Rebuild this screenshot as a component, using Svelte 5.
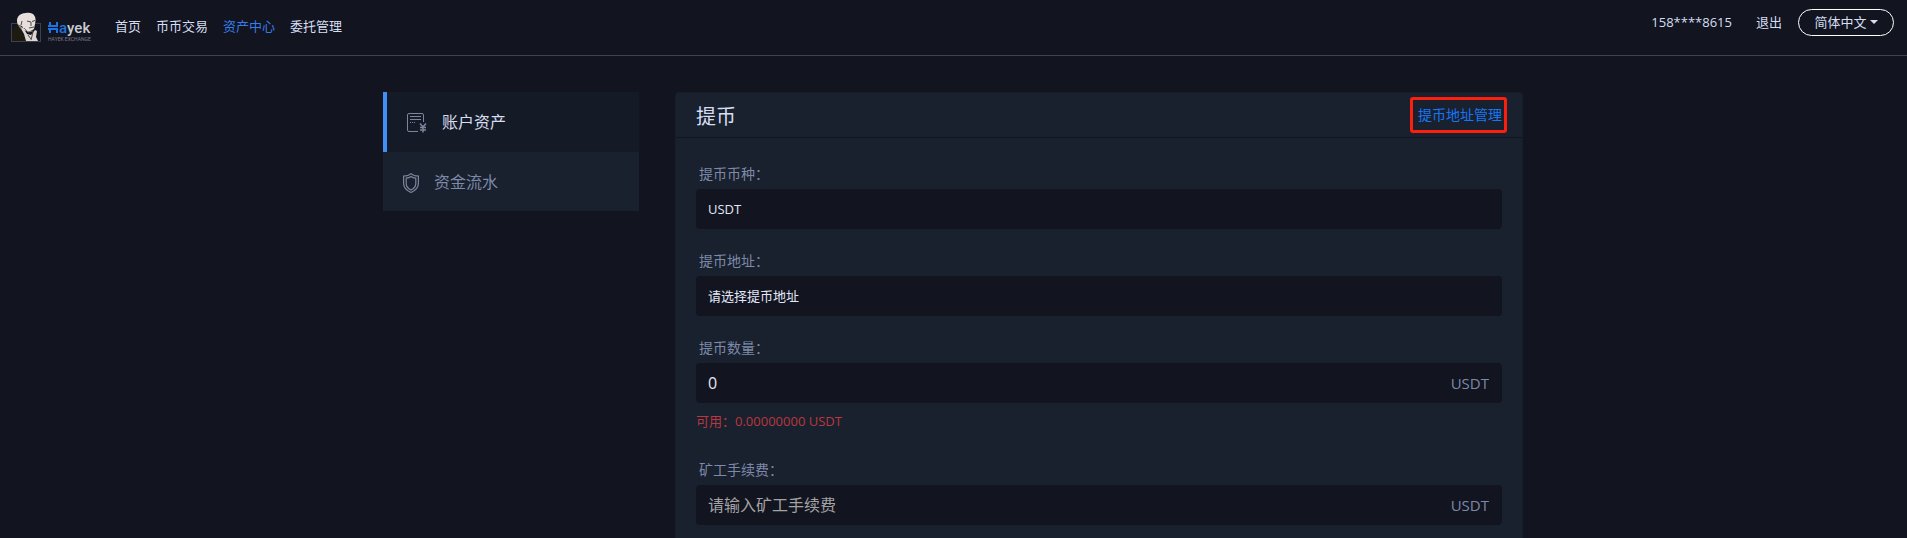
<script>
  const nav = [
    { label: '首页' },
    { label: '币币交易' },
    { label: '资产中心', active: true },
    { label: '委托管理' }
  ];
  let amount = $state('0');
  let fee = $state('');
</script>

<div class="page">
  <header>
    <a class="logo" href="#home" aria-label="Hayek">
      <svg width="31" height="31" viewBox="0 0 31 31" aria-hidden="true">
        <rect x="0.5" y="11.5" width="29" height="18" fill="none" stroke="#3d414d" />
        <path d="M1 29V19l4-5 4-1 6 8 2 8z" fill="#1d1a10" />
        <path d="M7 13C4 6 8 1 15 1c8-1 11 4 9 11l-1 5-5 3-5-2-2-4z" fill="#e8dfdc" />
        <path d="M8 13l5 4 3 5 4 1 4-5 2 1-1 6 2 4H15l-2-7z" fill="#dcd6d4" />
        <path d="M7 12l3 2 1 4-3-3z" fill="#8b807c" />
        <path d="M16 9l4 1M21 9.500l3-1M20 10v4M18 16l5-1M11 9l-1 4M17 23l3 4M22 20l-2 8" stroke="#4c4644" fill="none" />
        <path d="M13 16l4 4 5-1" stroke="#77706d" fill="none" />
      </svg>
      <span class="brand">
        <span class="name">
          <svg width="11" height="11" viewBox="0 0 11 11" aria-hidden="true">
            <path d="M2 0v3M2 8v3M9 0v3M9 8v3M0 4h10M0 7h10" stroke="#1f72df" stroke-width="2" fill="none" />
          </svg><b>a</b>yek
        </span>
        <span class="tag">HAYEK EXCHANGE</span>
      </span>
    </a>
    <nav>
      {#each nav as item}
        <a href="#nav" class:active={item.active}>{item.label}</a>
      {/each}
    </nav>
    <div class="user">
      <a href="#user">158****8615</a>
      <a href="#logout">退出</a>
      <button type="button">简体中文<i class="caret"></i></button>
    </div>
  </header>

  <main>
    <aside>
      <a class="item current" href="#assets">
        <svg width="20" height="20" viewBox="0 0 20 20" fill="none" stroke="#7d859d" aria-hidden="true">
          <path d="M11 18.500H2a1.500 1.500 0 0 1-1.500-1.500V2A1.500 1.500 0 0 1 2 .5h13A1.500 1.500 0 0 1 16.500 2V9" />
          <path d="M3 3.500h11M3 6.500h11" />
          <path d="M3 9.500h6" stroke-dasharray="1 1" />
          <path d="M13 10.500l3 3.500 3-3.500M16 14v5.500M13 14.500h6M13 17h6" stroke-width="1.5" />
        </svg>
        账户资产
      </a>
      <a class="item" href="#flow">
        <svg width="16" height="20" viewBox="0 0 16 20" fill="none" stroke="#7d859d" stroke-width="1.2" aria-hidden="true">
          <path d="M8 .6C6 2.500 3.500 3 .6 3v7.500c0 4 3 7 7.400 9 4.400-2 7.400-5 7.400-9V3C12.500 3 10 2.500 8 .6z" />
          <path d="M8 3.500C6.500 4.700 5 5 3.200 5.200V10.500c0 3 1.800 5 4.800 6.500 3-1.500 4.800-3.500 4.800-6.500V5.200C11 5 9.500 4.700 8 3.500z" />
        </svg>
        资金流水
      </a>
    </aside>

    <section>
      <div class="head">
        <h1>提币</h1>
        <a href="#addresses">提币地址管理</a>
      </div>
      <form>
        <div class="group">
          <label for="coin">提币币种：</label>
          <div class="field">
            <select id="coin"><option>USDT</option></select>
          </div>
        </div>
        <div class="group">
          <label for="address">提币地址：</label>
          <div class="field">
            <select id="address"><option>请选择提币地址</option></select>
          </div>
        </div>
        <div class="group">
          <label for="amount">提币数量：</label>
          <div class="field">
            <input id="amount" type="text" bind:value={amount} />
            <span>USDT</span>
          </div>
          <p>可用：0.00000000 USDT</p>
        </div>
        <div class="group">
          <label for="fee">矿工手续费：</label>
          <div class="field">
            <input id="fee" type="text" placeholder="请输入矿工手续费" bind:value={fee} />
            <span>USDT</span>
          </div>
        </div>
      </form>
    </section>
  </main>
</div>

<style>
  :global(body) {
    background: #121420;
  }
  .page {
    box-sizing: border-box;
    height: 100vh;
    overflow: hidden;
    display: flex;
    flex-direction: column;
    background: #121420;
    color: #d5def2;
    font: 13px/20px "Open Sans", "Noto Sans CJK SC", sans-serif;
  }
  a {
    color: inherit;
    text-decoration: none;
  }
  header {
    box-sizing: border-box;
    flex: none;
    display: flex;
    align-items: center;
    height: 56px;
    padding: 0 13px 0 11px;
    border-bottom: 1px solid #41434f;
  }
  .logo {
    display: flex;
    align-items: center;
    gap: 6px;
  }
  .brand {
    display: flex;
    flex-direction: column;
    width: 43px;
    padding-top: 8px;
  }
  .name {
    display: flex;
    align-items: center;
    font: 500 15px/14px Roboto, sans-serif;
    color: #c9cbd3;
  }
  .name b {
    font-weight: 500;
    color: #1f72df;
  }
  .tag {
    font: 5px/8px Roboto, sans-serif;
    color: #777a86;
    white-space: nowrap;
  }
  nav {
    display: flex;
    gap: 15px;
    margin-left: 24px;
    padding-bottom: 4px;
  }
  nav .active {
    color: #357ce8;
  }
  .user {
    display: flex;
    align-items: center;
    gap: 24px;
    margin-left: auto;
    padding-bottom: 11px;
  }
  button {
    display: flex;
    align-items: center;
    justify-content: center;
    box-sizing: border-box;
    width: 96px;
    height: 27px;
    margin-left: -8px;
    padding: 0;
    border: 1px solid #fff;
    border-radius: 14px;
    background: none;
    color: inherit;
    font: inherit;
  }
  .caret {
    margin-left: 3px;
    border: 4px solid transparent;
    border-top-color: currentColor;
    border-bottom: 0;
  }
  main {
    flex: 1;
    box-sizing: border-box;
    display: flex;
    gap: 36px;
    width: 100%;
    max-width: 1141px;
    margin: 0 auto;
    padding: 36px 1px 0 0;
  }
  aside {
    flex: 0 0 256px;
  }
  .item {
    box-sizing: border-box;
    display: flex;
    align-items: center;
    gap: 15px;
    height: 59px;
    padding-left: 20px;
    background: #19202e;
    color: #7d89a8;
    font-size: 16px;
  }
  .item svg {
    margin-top: 2px;
  }
  .item.current {
    height: 60px;
    border-left: 4px solid #4090f7;
    background: #151b26;
    color: #d5def2;
  }
  section {
    flex: 1;
    border: 1px solid #171d2a;
    border-bottom: 0;
    border-radius: 4px 4px 0 0;
    background: #19202e;
  }
  .head {
    display: flex;
    align-items: center;
    justify-content: space-between;
    height: 44px;
    padding: 0 15px 0 20px;
    border-bottom: 1px solid #121420;
  }
  h1 {
    margin: 0;
    padding-top: 3px;
    font-size: 20px;
    font-weight: 400;
  }
  .head a {
    padding: 5px 2px 5px 5px;
    border: 3px solid #fb1f10;
    border-radius: 3px;
    color: #1677f5;
    font-size: 14px;
  }
  form {
    display: flex;
    flex-direction: column;
    gap: 22px;
    padding: 26px 20px 0;
  }
  label {
    display: block;
    height: 20px;
    margin-bottom: 5px;
    padding-left: 3px;
    color: #7d89a8;
    font-size: 14px;
  }
  .field {
    display: flex;
    align-items: center;
    height: 40px;
    padding: 0 13px 0 12px;
    border-radius: 4px;
    background: #121420;
    color: #7d89a8;
    font-size: 15px;
  }
  select,
  input {
    flex: 1;
    min-width: 0;
    height: 40px;
    margin: 0;
    padding: 0;
    border: 0;
    outline: 0;
    appearance: none;
    background: none;
    color: #e2e8f8;
    font: inherit;
    font-size: 16px;
  }
  select {
    font-size: 13px;
  }
  input::placeholder {
    color: #a3a3a3;
    opacity: 1;
  }
  p {
    margin: 8px 0 7px;
    color: #b9383f;
  }
</style>
